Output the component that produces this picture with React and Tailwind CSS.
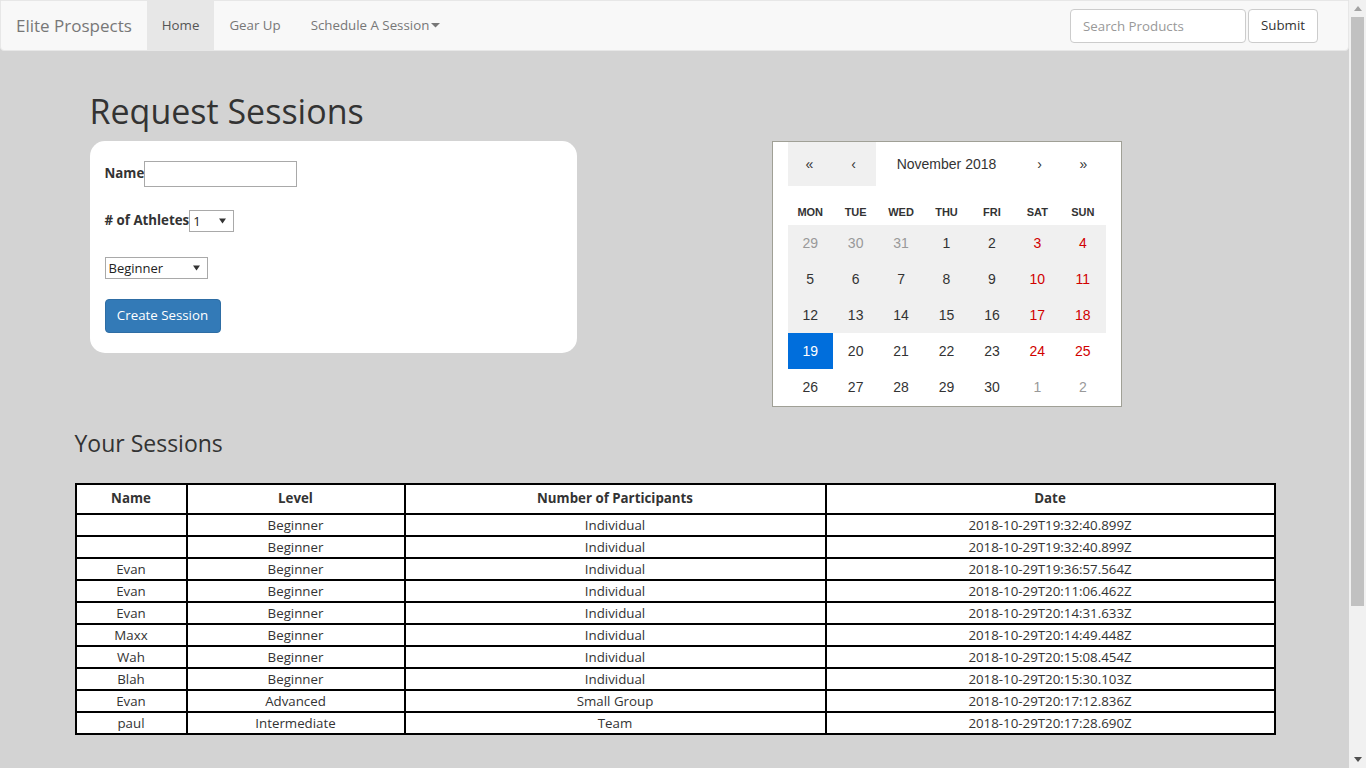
import React from 'react';

const sessions = [
  ['', 'Beginner', 'Individual', '2018-10-29T19:32:40.899Z'],
  ['', 'Beginner', 'Individual', '2018-10-29T19:32:40.899Z'],
  ['Evan', 'Beginner', 'Individual', '2018-10-29T19:36:57.564Z'],
  ['Evan', 'Beginner', 'Individual', '2018-10-29T20:11:06.462Z'],
  ['Evan', 'Beginner', 'Individual', '2018-10-29T20:14:31.633Z'],
  ['Maxx', 'Beginner', 'Individual', '2018-10-29T20:14:49.448Z'],
  ['Wah', 'Beginner', 'Individual', '2018-10-29T20:15:08.454Z'],
  ['Blah', 'Beginner', 'Individual', '2018-10-29T20:15:30.103Z'],
  ['Evan', 'Advanced', 'Small Group', '2018-10-29T20:17:12.836Z'],
  ['paul', 'Intermediate', 'Team', '2018-10-29T20:17:28.690Z'],
];

const weeks = [
  [29, 30, 31, 1, 2, 3, 4],
  [5, 6, 7, 8, 9, 10, 11],
  [12, 13, 14, 15, 16, 17, 18],
  [19, 20, 21, 22, 23, 24, 25],
  [26, 27, 28, 29, 30, 1, 2],
];

const days = ['MON', 'TUE', 'WED', 'THU', 'FRI', 'SAT', 'SUN'];

function SelectBox({ value, width }) {
  return (
    <div className={`relative ${width} h-[22px] border border-[#a9a9a9] bg-white`}>
      <select
        defaultValue={value}
        className="appearance-none w-full h-full bg-transparent pl-[3px] text-[13px] leading-[20px] text-[#222] outline-none"
      >
        <option>{value}</option>
      </select>
      <span className="absolute right-[7px] top-[7px] pointer-events-none">
        <svg width="7" height="6" viewBox="0 0 7 6">
          <path d="M0 0.5h7L3.5 5.5z" fill="#333" />
        </svg>
      </span>
    </div>
  );
}

function Navbar() {
  return (
    <nav className="h-[51px] bg-[#f8f8f8] border border-[#e7e7e7] rounded-b-[4px] flex items-stretch">
      <div className="px-[15px] flex items-center text-[17px] text-[#777]">Elite Prospects</div>
      <div className="flex items-stretch text-[13.3px] text-[#777]">
        <span className="px-[15px] flex items-center bg-[#e7e7e7] text-[#555]">Home</span>
        <span className="px-[15px] flex items-center">Gear Up</span>
        <span className="px-[15px] flex items-center gap-[2px]">
          Schedule A Session
          <svg width="9" height="5" viewBox="0 0 9 5">
            <path d="M0 0h9L4.5 4.5z" fill="#777" />
          </svg>
        </span>
      </div>
      <div className="ml-auto mr-[30px] flex items-center gap-[2px]">
        <input
          placeholder="Search Products"
          className="w-[176px] h-[34px] border border-[#ccc] rounded-[4px] bg-white px-3 text-[13.3px] text-[#555] placeholder:text-[#999] outline-none"
        />
        <button className="w-[70px] h-[34px] border border-[#ccc] rounded-[4px] bg-white text-[13.3px] text-[#333]">
          Submit
        </button>
      </div>
    </nav>
  );
}

function Calendar() {
  return (
    <div className="w-[350px] h-[266px] border border-[#a0a096] bg-white px-[15px] font-['Liberation_Sans',Arial,sans-serif]">
      <div className="flex h-[44px] text-[14px] text-[#333]">
        <span className="w-[44px] flex items-center justify-center bg-[#f0f0f0]">«</span>
        <span className="w-[44px] flex items-center justify-center bg-[#f0f0f0]">‹</span>
        <span className="flex-1 flex items-center justify-center">November 2018</span>
        <span className="w-[44px] flex items-center justify-center">›</span>
        <span className="w-[44px] flex items-center justify-center">»</span>
      </div>
      <div className="grid grid-cols-7 mt-[14px] h-[24px] items-center text-[11px] font-bold text-[#333]">
        {days.map((d) => (
          <span key={d} className="text-center">{d}</span>
        ))}
      </div>
      <div className="mt-[1px]">
        {weeks.map((w, wi) => (
          <div key={wi} className={`grid grid-cols-7 h-[36px] ${wi < 3 ? 'bg-[#f0f0f0]' : ''}`}>
            {w.map((d, di) => {
              const other = (wi === 0 && di < 3) || (wi === 4 && di > 4);
              const today = wi === 3 && di === 0;
              let cls = 'text-[#333]';
              if (other) cls = 'text-[#999]';
              else if (di > 4) cls = 'text-[#d10000]';
              if (today) cls = 'bg-[#006edc] text-white';
              return (
                <span key={di} className={`flex items-center justify-center text-[14px] ${cls}`}>
                  {d}
                </span>
              );
            })}
          </div>
        ))}
      </div>
    </div>
  );
}

function Scrollbar() {
  return (
    <div className="w-[17px] h-screen bg-[#f1f1f1] flex flex-col items-center">
      <div className="h-[17px] flex items-center justify-center">
        <svg width="8" height="5" viewBox="0 0 8 5">
          <path d="M0 5L4 0l4 5z" fill="#a3a3a3" />
        </svg>
      </div>
      <div className="w-[13px] h-[589px] bg-[#c1c1c1]" />
      <div className="mt-auto h-[17px] flex items-center justify-center">
        <svg width="8" height="5" viewBox="0 0 8 5">
          <path d="M0 0h8L4 5z" fill="#505050" />
        </svg>
      </div>
    </div>
  );
}

export default function App() {
  return (
    <div className="flex h-screen overflow-hidden bg-[#d3d3d3] font-['Open_Sans','Noto_Sans',sans-serif] text-[13.3px] text-[#333]">
      <div className="w-[1349px]">
        <Navbar />
        <div className="w-[1200px] mx-auto mt-[20px]">
          {/* Request form + calendar */}
          <div className="flex">
            <div className="w-[697px] pl-[15px]">
              <h1 className="mt-[20px] mb-[10px] text-[34px] leading-[40px] font-normal text-[#333]">
                Request Sessions
              </h1>
              <div className="w-[487px] h-[212px] bg-white rounded-[15px] px-[15px] pt-[20px]">
                <div className="flex items-center">
                  <label className="font-bold">Name</label>
                  <input className="w-[153px] h-[26px] border border-[#a9a9a9] bg-white outline-none px-1" />
                </div>
                <div className="flex items-center mt-[23px]">
                  <label className="font-bold"># of Athletes</label>
                  <SelectBox value="1" width="w-[45px]" />
                </div>
                <div className="mt-[25px]">
                  <SelectBox value="Beginner" width="w-[103px]" />
                </div>
                <button className="mt-[20px] w-[116px] h-[34px] rounded-[4px] bg-[#337ab7] border border-[#2e6da4] text-white">
                  Create Session
                </button>
              </div>
            </div>
            <div className="mt-[70px]">
              <Calendar />
            </div>
          </div>

          {/* Sessions table */}
          <h2 className="mt-[20px] text-[23px] leading-[33px] font-normal text-[#333]">Your Sessions</h2>
          <table className="mt-[23px] w-[1199px] table-fixed border-collapse bg-white">
            <colgroup>
              <col className="w-[111px]" />
              <col className="w-[218px]" />
              <col className="w-[421px]" />
              <col className="w-[449px]" />
            </colgroup>
            <thead>
              <tr className="h-[30px]">
                {['Name', 'Level', 'Number of Participants', 'Date'].map((h) => (
                  <th key={h} className="border-2 border-black p-0 font-bold text-center">
                    {h}
                  </th>
                ))}
              </tr>
            </thead>
            <tbody>
              {sessions.map((r, i) => (
                <tr key={i} className="h-[22px]">
                  {r.map((c, j) => (
                    <td key={j} className="border-2 border-black p-0 leading-[18px] text-center">
                      {c}
                    </td>
                  ))}
                </tr>
              ))}
            </tbody>
          </table>
        </div>
      </div>
      <Scrollbar />
    </div>
  );
}
